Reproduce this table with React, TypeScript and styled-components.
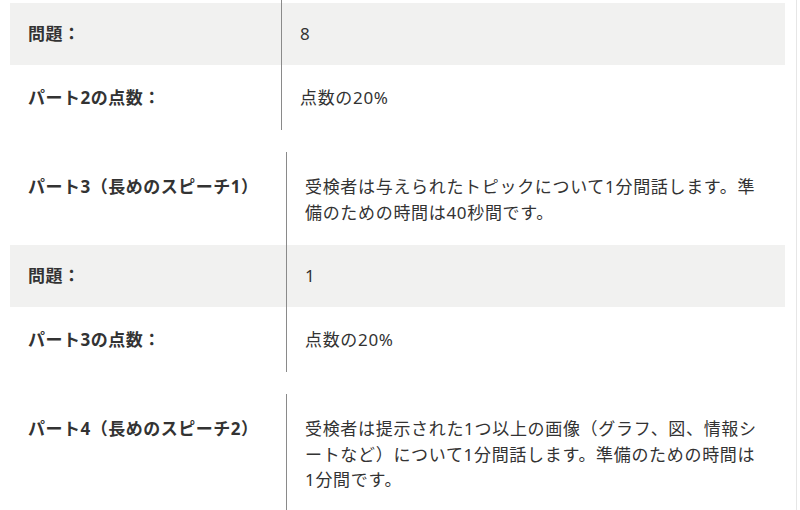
import React from "react";
import styled, { createGlobalStyle } from "styled-components";

const Global = createGlobalStyle`
  html, body { margin: 0; padding: 0; background: #fff; }
  body {
    font-family: "Noto Sans", "Noto Sans CJK JP", sans-serif;
    color: #333;
    overflow: hidden;
  }
`;

const Page = styled.div`
  width: 797px;
  height: 510px;
  box-sizing: border-box;
  padding: 0 12px 0 10px;
  border-right: 1px solid #e6e6e6;
  display: flex;
  flex-direction: column;
  gap: 22px;
`;

const Table = styled.div<{ $labelWidth: number }>`
  display: grid;
  grid-template-columns: ${(p) => p.$labelWidth}px 1fr;
  width: 775px;
`;

const Row = styled.div<{ $shade?: boolean; $lead?: boolean }>`
  display: contents;
  & > * {
    background: ${(p) => (p.$shade ? "#f1f1f0" : "#fff")};
    padding-top: ${(p) => (p.$lead ? 22 : p.$shade ? 18 : 20)}px;
    padding-bottom: ${(p) => (p.$shade ? 18.5 : p.$lead ? 20 : 19.5)}px;
  }
`;

const Cap = styled.div`
  display: contents;
  & > * {
    height: 3px;
    padding: 0 !important;
    background: #fff;
  }
`;

const Label = styled.div`
  padding-left: 18px;
  padding-right: 12px;
  font-size: 17px;
  line-height: 25.5px;
  font-weight: 700;
  letter-spacing: 0.03em;
  color: #333;
`;

const Value = styled.div`
  border-left: 1px solid #8a8a8a;
  padding-left: 18px;
  padding-right: 24px;
  font-size: 17px;
  line-height: 25.5px;
  font-weight: 400;
  letter-spacing: 0.04em;
  color: #333;
`;

export default function App() {
  return (
    <>
      <Global />
      <Page>
        <Table $labelWidth={271}>
          <Cap>
            <Label />
            <Value />
          </Cap>
          <Row $shade>
            <Label>問題：</Label>
            <Value>8</Value>
          </Row>
          <Row>
            <Label>パート2の点数：</Label>
            <Value>点数の20%</Value>
          </Row>
        </Table>
        <Table $labelWidth={276}>
          <Row $lead>
            <Label>パート3（長めのスピーチ1）</Label>
            <Value>受検者は与えられたトピックについて1分間話します。準備のための時間は40秒間です。</Value>
          </Row>
          <Row $shade>
            <Label>問題：</Label>
            <Value>1</Value>
          </Row>
          <Row>
            <Label>パート3の点数：</Label>
            <Value>点数の20%</Value>
          </Row>
        </Table>
        <Table $labelWidth={276}>
          <Row $lead>
            <Label>パート4（長めのスピーチ2）</Label>
            <Value>
              受検者は提示された1つ以上の画像（グラフ、図、情報シートなど）について1分間話します。準備のための時間は1分間です。
            </Value>
          </Row>
        </Table>
      </Page>
    </>
  );
}
